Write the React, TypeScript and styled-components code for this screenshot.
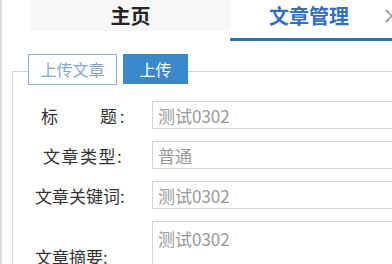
import React from "react";
import styled, { createGlobalStyle } from "styled-components";

const GlobalStyle = createGlobalStyle`
  html, body {
    margin: 0;
    padding: 0;
    background: #ffffff;
    font-family: "Noto Sans CJK SC", "Noto Sans", sans-serif;
  }
  * { box-sizing: border-box; }
`;

const Page = styled.div`
  width: 392px;
  height: 264px;
  overflow: hidden;
  border-left: 2px solid #dcdcdc;
  background: #fff;
`;

const TabBar = styled.div`
  position: relative;
  display: flex;
  align-items: flex-start;
  padding-left: 29px;
  height: 41px;
`;

const Tab = styled.div<{ $active?: boolean }>`
  ${(p) =>
    p.$active
      ? `
    flex: 1;
    height: 41px;
    border-bottom: 3px solid #2f72c6;
    color: #2f6fc4;
    padding-right: 4px;
  `
      : `
    width: 199px;
    height: 31px;
    background: #f7f7f7;
    color: #222;
  `}
  line-height: 31px;
  text-align: center;
  font-size: 20px;
  font-weight: 700;
`;

const ScrollArrow = styled.div`
  position: absolute;
  right: -2px;
  top: 8px;
  width: 10px;
  height: 16px;
  display: flex;
`;

const Content = styled.div`
  padding: 13px 0 0 10px;
`;

const Fieldset = styled.fieldset`
  margin: 0;
  padding: 0;
  width: 420px;
  border: 1px solid #d5d5d5;
  min-inline-size: 0;
`;

const Legend = styled.legend`
  margin-left: 15px;
  padding: 0 0 4px 0;
`;

const LegendRow = styled.div`
  display: flex;
  align-items: center;
  gap: 6px;
`;

const OutlineButton = styled.button`
  height: 31px;
  width: 89px;
  padding: 0;
  border: 1px solid #8db4d4;
  background: #fff;
  color: #86a8c8;
  font-family: inherit;
  font-size: 16px;
  line-height: 29px;
`;

const SolidButton = styled.button`
  height: 30px;
  width: 65px;
  padding: 0;
  border: none;
  background: #3a87c9;
  color: #fff;
  font-family: inherit;
  font-size: 16px;
  line-height: 30px;
  margin-top: -1px;
`;

const Form = styled.div`
  display: grid;
  grid-template-columns: 139px 1fr;
  row-gap: 12px;
  padding-top: 12px;
`;

const Label = styled.label<{ $indent: number; $spacing?: string }>`
  display: flex;
  align-items: center;
  padding-left: ${(p) => p.$indent}px;
  letter-spacing: ${(p) => p.$spacing || "0"};
  font-size: 17px;
  color: #333;
  white-space: pre;
`;

const Input = styled.input`
  height: 28px;
  border: 1px solid #d3d3d3;
  padding: 0 5px;
  font-family: inherit;
  font-size: 17px;
  color: #999;
  background: #fff;
  outline: none;
`;

const TextArea = styled.textarea`
  height: 70px;
  border: 1px solid #d3d3d3;
  padding: 4px 5px;
  font-family: inherit;
  font-size: 17px;
  color: #999;
  background: #fff;
  resize: none;
  outline: none;
`;

export default function App() {
  return (
    <>
      <GlobalStyle />
      <Page>
        <TabBar>
          <Tab>主页</Tab>
          <Tab $active>文章管理</Tab>
          <ScrollArrow>
            <svg width="10" height="16" viewBox="0 0 10 16">
              <polyline points="2,2 8,8 2,14" fill="none" stroke="#a0a0a0" strokeWidth="1.8" />
            </svg>
          </ScrollArrow>
        </TabBar>
        <Content>
          <Fieldset>
            <Legend>
              <LegendRow>
                <OutlineButton>上传文章</OutlineButton>
                <SolidButton>上传</SolidButton>
              </LegendRow>
            </Legend>
            <Form>
              <Label $indent={28} $spacing="2.7px">标　　题:</Label>
              <Input defaultValue="测试0302" />
              <Label $indent={30} $spacing="1.5px">文章类型:</Label>
              <Input defaultValue="普通" />
              <Label $indent={22}>文章关键词:</Label>
              <Input defaultValue="测试0302" />
              <Label $indent={22}>文章摘要:</Label>
              <TextArea defaultValue="测试0302" />
            </Form>
          </Fieldset>
        </Content>
      </Page>
    </>
  );
}
